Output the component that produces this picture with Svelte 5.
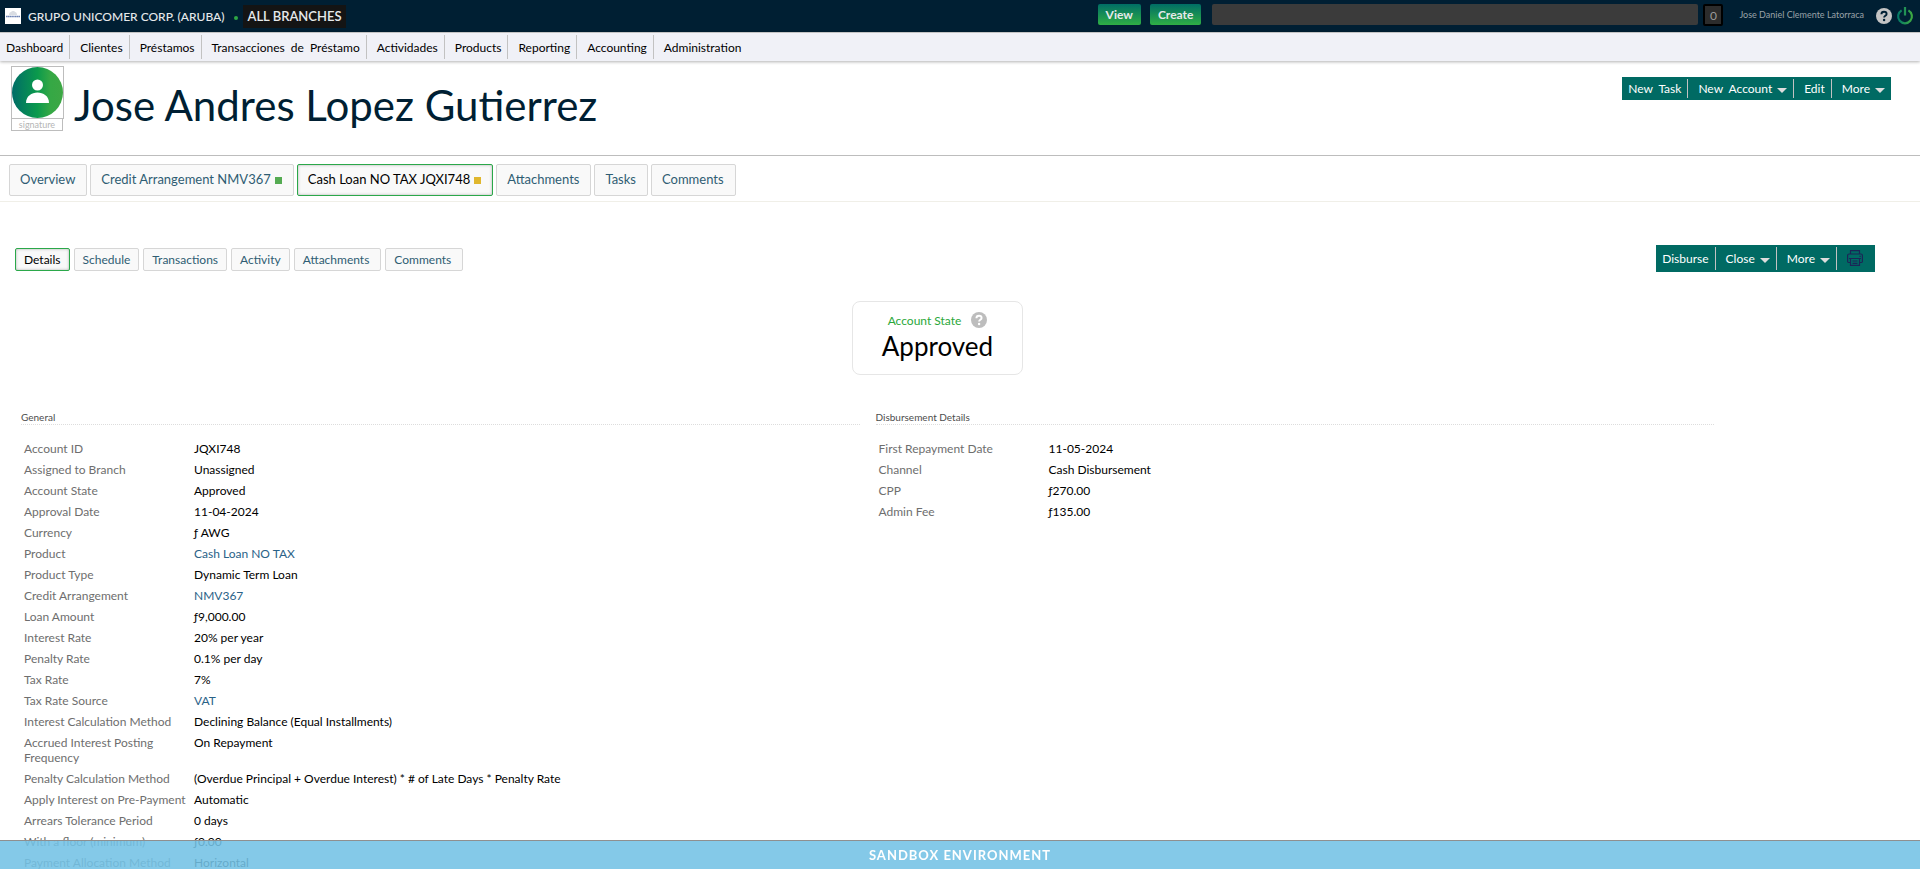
<script>
  const menu = ['Dashboard', 'Clientes', 'Préstamos', 'Transacciones \u00a0de \u00a0Préstamo', 'Actividades', 'Products', 'Reporting', 'Accounting', 'Administration'];

  const tabs = [
    { text: 'Overview' },
    { text: 'Credit Arrangement NMV367', mark: 'green' },
    { text: 'Cash Loan NO TAX JQXI748', mark: 'amber', active: true },
    { text: 'Attachments' },
    { text: 'Tasks' },
    { text: 'Comments' }
  ];

  const subTabs = ['Details', 'Schedule', 'Transactions', 'Activity', 'Attachments', 'Comments'];

  const sections = [
    {
      title: 'General',
      rows: [
        ['Account ID', 'JQXI748'],
        ['Assigned to Branch', 'Unassigned'],
        ['Account State', 'Approved'],
        ['Approval Date', '11-04-2024'],
        ['Currency', 'ƒ AWG'],
        ['Product', 'Cash Loan NO TAX', true],
        ['Product Type', 'Dynamic Term Loan'],
        ['Credit Arrangement', 'NMV367', true],
        ['Loan Amount', 'ƒ9,000.00'],
        ['Interest Rate', '20% per year'],
        ['Penalty Rate', '0.1% per day'],
        ['Tax Rate', '7%'],
        ['Tax Rate Source', 'VAT', true],
        ['Interest Calculation Method', 'Declining Balance (Equal Installments)'],
        ['Accrued Interest Posting Frequency', 'On Repayment'],
        ['Penalty Calculation Method', '(Overdue Principal + Overdue Interest) * # of Late Days * Penalty Rate'],
        ['Apply Interest on Pre-Payment', 'Automatic'],
        ['Arrears Tolerance Period', '0 days'],
        ['With a floor (minimum)', 'ƒ0.00'],
        ['Payment Allocation Method', 'Horizontal']
      ]
    },
    {
      title: 'Disbursement Details',
      rows: [
        ['First Repayment Date', '11-05-2024'],
        ['Channel', 'Cash Disbursement'],
        ['CPP', 'ƒ270.00'],
        ['Admin Fee', 'ƒ135.00']
      ]
    }
  ];
</script>

{#snippet help(fill, ink)}
  <svg class="icon" viewBox="0 0 16 16" aria-hidden="true">
    <circle cx="8" cy="8" r="8" {fill} />
    <path d="M5.4 6.2C5.4 4.6 6.5 3.7 8 3.7s2.6.9 2.6 2.2c0 1.9-2.5 1.9-2.5 3.7" fill="none" stroke={ink} stroke-width="1.9" />
    <circle cx="8.1" cy="12" r="1.2" fill={ink} />
  </svg>
{/snippet}

<div class="page">
  <header class="topbar">
    <svg class="logo" viewBox="0 0 16 16" aria-hidden="true">
      <rect width="16" height="16" fill="#fff" />
      <path d="M4 7c0-2 1-3 2-3 .5-1.5 4-1.5 4 0 1.5 0 2 1.5 2 3" fill="#d9dde3" />
      <path d="M1 8.5h14" stroke="#6d83b5" stroke-width="1.6" stroke-dasharray="1.5 .3" />
    </svg>
    <span class="org">GRUPO UNICOMER CORP. (ARUBA)</span>
    <span class="dot"></span>
    <button class="branch">ALL BRANCHES</button>
    <div class="tools">
      <button class="go">View</button>
      <button class="go">Create</button>
      <input class="search" type="text" aria-label="Search" />
      <button class="count">0</button>
      <a class="user" href="#user">Jose Daniel Clemente Latorraca</a>
      <button class="plain" aria-label="Help">{@render help('#c4c4c4', '#001f33')}</button>
      <button class="plain power" aria-label="Log out">
        <svg class="icon" viewBox="0 0 16 16" aria-hidden="true">
          <defs>
            <linearGradient id="power" gradientUnits="userSpaceOnUse" x1="0" y1="0" x2="16" y2="0">
              <stop offset="0" stop-color="#00766a" />
              <stop offset="1" stop-color="#42ad3f" />
            </linearGradient>
          </defs>
          <path d="M4.6 2.4a6.9 6.9 0 1 0 6.8 0M8 -1v8.5" fill="none" stroke="url(#power)" stroke-width="2.2" />
        </svg>
      </button>
    </div>
  </header>

  <nav class="menu">
    {#each menu as item}
      <a href="#menu">{item}</a>
    {/each}
  </nav>

  <section class="client">
    <div class="portrait">
      <svg class="avatar" viewBox="0 0 51 51" aria-hidden="true">
        <defs>
          <linearGradient id="avatar">
            <stop offset="0" stop-color="#006c67" />
            <stop offset=".5" stop-color="#0b9a4c" />
            <stop offset=".75" stop-color="#35a845" />
            <stop offset="1" stop-color="#3da744" />
          </linearGradient>
        </defs>
        <circle cx="25.5" cy="25.5" r="25.5" fill="url(#avatar)" />
        <circle cx="25.5" cy="18" r="5.5" fill="#fff" />
        <path d="M14 36c0-14 23-14 23 0z" fill="#fff" />
      </svg>
      <div class="signature">signature</div>
    </div>
    <h1>Jose Andres Lopez Gutierrez</h1>
    <div class="actions">
      <button>New &nbsp;Task</button>
      <button>New &nbsp;Account<i class="caret"></i></button>
      <button>Edit</button>
      <button>More<i class="caret"></i></button>
    </div>
  </section>

  <nav class="tabs">
    {#each tabs as tab}
      <a href="#tab" class:active={tab.active}>{tab.text}{#if tab.mark}<i class="mark {tab.mark}"></i>{/if}</a>
    {/each}
  </nav>

  <main>
    <div class="bar">
      <nav class="subtabs">
        {#each subTabs as tab, i}
          <a href="#subtab" class:active={i === 0}>{tab}</a>
        {/each}
      </nav>
      <div class="actions tall">
        <button>Disburse</button>
        <button>Close<i class="caret"></i></button>
        <button>More<i class="caret"></i></button>
        <button aria-label="Print">
          <svg class="icon" viewBox="0 0 16 16" aria-hidden="true">
            <g fill="none" stroke="#1b2657" stroke-width="1.2">
              <path d="M3.5 4V.6h9V4M3.5 12.5h-2A1 1 0 0 1 .6 11.5V5.5a1.5 1.5 0 0 1 1.5-1.5h11.8a1.5 1.5 0 0 1 1.5 1.5v6a1 1 0 0 1-.9 1h-2" />
              <path d="M3.5 8.5h9v6.9h-9zM2 8.5h12M5.5 11h5M5.5 13.3h5M12.5 6.3h1.2" />
            </g>
          </svg>
        </button>
      </div>
    </div>

    <div class="state">
      <div class="state-label">Account State {@render help('#bdbdbd', '#fff')}</div>
      <div class="state-value">Approved</div>
    </div>

    <div class="columns">
      {#each sections as section}
        <section>
          <h2>{section.title}</h2>
          <table>
            <tbody>
              {#each section.rows as [label, value, link]}
                <tr>
                  <th scope="row">{label}</th>
                  <td>{#if link}<a href="#record">{value}</a>{:else}{value}{/if}</td>
                </tr>
              {/each}
            </tbody>
          </table>
        </section>
      {/each}
    </div>
  </main>
</div>

<footer>SANDBOX ENVIRONMENT</footer>

<style>
  :global(body) {
    background: #fff;
  }

  .page,
  footer {
    font-family: Lato, sans-serif;
    font-size: 12px;
    line-height: 15px;
    color: #000;
  }

  .page {
    height: 100vh;
    overflow: hidden;
  }

  button,
  input {
    font: inherit;
    border: 0;
    padding: 0;
    background: none;
    color: inherit;
  }

  a {
    color: inherit;
    text-decoration: none;
  }

  .icon {
    display: block;
    width: 16px;
    height: 16px;
    overflow: visible;
  }

  .topbar {
    display: flex;
    align-items: center;
    height: 32px;
    padding: 0 7px 0 5px;
    background: #001f33;
    color: #e6e9eb;
  }

  .logo {
    width: 16px;
    height: 16px;
  }

  .org {
    margin-left: 7px;
    font-weight: 500;
  }

  .dot {
    width: 4px;
    height: 4px;
    margin: 4px 5px 0 10px;
    border-radius: 2px;
    background: #2da745;
  }

  .branch {
    height: 23px;
    padding: 0 4px;
    background: #141414;
    font-size: 13px;
    font-weight: 600;
  }

  .tools {
    display: flex;
    align-items: center;
    margin-left: auto;
  }

  .go {
    height: 21px;
    margin: 0 9px 4px 0;
    padding: 0 8px;
    border-radius: 2px;
    background: linear-gradient(#006d65, #2fae45);
    font-weight: 700;
  }

  .search {
    width: 25vw;
    height: 21px;
    margin: 0 5px 3px 2px;
    padding: 0 3px;
    border-radius: 2px;
    background: #3b3b3b;
  }

  .count {
    width: 20px;
    height: 22px;
    margin-bottom: 2px;
    border: 2px solid #000;
    border-radius: 2px;
    background: #2c2c2c;
    color: #9a9a9a;
  }

  .user {
    margin: 0 12px 4px 16px;
    font-size: 9px;
    color: #9aa2a8;
  }

  .power {
    margin-left: 5px;
  }

  .menu {
    display: flex;
    height: 26px;
    padding-top: 2px;
    border-top: 1px solid #c4c4c4;
    background: #f0f1f7;
    box-shadow: 0 1px 3px rgba(0, 0, 0, 0.3);
  }

  .menu a {
    height: 24px;
    padding: 0 6px 0 10px;
    border-right: 1px solid #c2c2c2;
    line-height: 26px;
  }

  .menu a:first-child {
    padding-left: 6px;
  }

  .menu a:last-child {
    border-right: 0;
  }

  .client {
    display: flex;
    align-items: flex-start;
    height: 89px;
    padding: 5px 29px 0 11px;
    border-bottom: 1px solid #bdbdbd;
  }

  .portrait {
    width: 53px;
  }

  .avatar {
    display: block;
    width: 51px;
    height: 51px;
    border: 1px solid #bdbdbd;
  }

  .signature {
    height: 11px;
    margin-right: 1px;
    border: 1px solid #bdbdbd;
    border-top: 0;
    font-size: 9px;
    line-height: 11px;
    text-align: center;
    color: #b5b5b5;
  }

  h1 {
    margin: 13px 0 0 10px;
    font-size: 42px;
    font-weight: 400;
    line-height: 52px;
    color: #001f33;
  }

  .actions {
    display: flex;
    margin: 11px 0 0 auto;
    background: #006a63;
    color: #fff;
  }

  .actions button {
    display: flex;
    align-items: center;
    gap: 5px;
    height: 19px;
    margin: 2px 0;
    padding: 0 6px 0 10px;
    border-right: 1px solid #c2c2c2;
  }

  .actions button:first-child {
    padding-left: 6px;
  }

  .actions button:last-child {
    border-right: 0;
  }

  .caret {
    margin-top: 3px;
    border: 5px solid transparent;
    border-top-color: #ddd;
    border-bottom: 0;
  }

  .tabs {
    display: flex;
    gap: 3px;
    padding: 8px 9px 5px;
    border-bottom: 1px solid #f0efe8;
    font-size: 13px;
  }

  .tabs a,
  .subtabs a {
    border: 1px solid #d6d6d6;
    border-radius: 2px;
    background: #f9f9f9;
    color: #2f5d73;
  }

  .tabs a {
    height: 30px;
    padding: 0 11px 0 10px;
    line-height: 28px;
  }

  .tabs .active,
  .subtabs .active {
    border-color: #2ba84a;
    box-shadow: inset 0 0 3px rgba(0, 0, 0, 0.3);
    color: #000;
  }

  .mark {
    display: inline-block;
    width: 7px;
    height: 7px;
    margin-left: 4px;
  }

  .green {
    background: #55ab52;
  }

  .amber {
    background: #e0b72e;
  }

  main {
    padding-right: 45px;
  }

  .bar {
    display: flex;
    justify-content: space-between;
    align-items: flex-start;
    padding: 43px 0 0 15px;
  }

  .subtabs {
    display: flex;
    gap: 4px;
    margin-top: 3px;
  }

  .subtabs a {
    padding: 0 8px;
    line-height: 21px;
  }

  .subtabs a:nth-child(n + 5) {
    padding-right: 11px;
  }

  .bar .actions {
    margin-top: 0;
  }

  .tall button {
    height: 23px;
  }

  .tall button:last-child {
    padding: 0 12px 2px 10px;
  }

  .state {
    width: fit-content;
    height: 72px;
    margin: 29px auto 0;
    padding: 0 29px;
    border: 1px solid #e6e6e6;
    border-radius: 8px;
    text-align: center;
  }

  .state-label {
    display: flex;
    align-items: center;
    justify-content: center;
    gap: 10px;
    padding-top: 10px;
    color: #2ba83a;
  }

  .state-value {
    margin-top: 2px;
    font-size: 26px;
    line-height: 32px;
  }

  .columns {
    display: grid;
    grid-template-columns: 1fr 1fr;
    gap: 16px;
    margin-top: 36px;
    padding: 0 161px 0 21px;
  }

  h2 {
    margin: 0 0 13px;
    border-bottom: 1px dotted #ddd;
    font-size: 10px;
    font-weight: 400;
    line-height: 13px;
    color: #4d4d4d;
  }

  table {
    border-collapse: collapse;
  }

  th,
  td {
    padding: 3px;
    text-align: left;
    vertical-align: top;
    font-weight: 400;
  }

  th {
    width: 164px;
    color: #6e6e6e;
  }

  td a {
    color: #2a6287;
  }

  footer {
    position: fixed;
    right: 0;
    bottom: 0;
    left: 0;
    border-top: 1px solid #8f8f8f;
    background: rgba(115, 193, 229, 0.88);
    font-size: 13px;
    font-weight: 700;
    line-height: 28px;
    letter-spacing: 1px;
    text-align: center;
    color: #fff;
  }
</style>
